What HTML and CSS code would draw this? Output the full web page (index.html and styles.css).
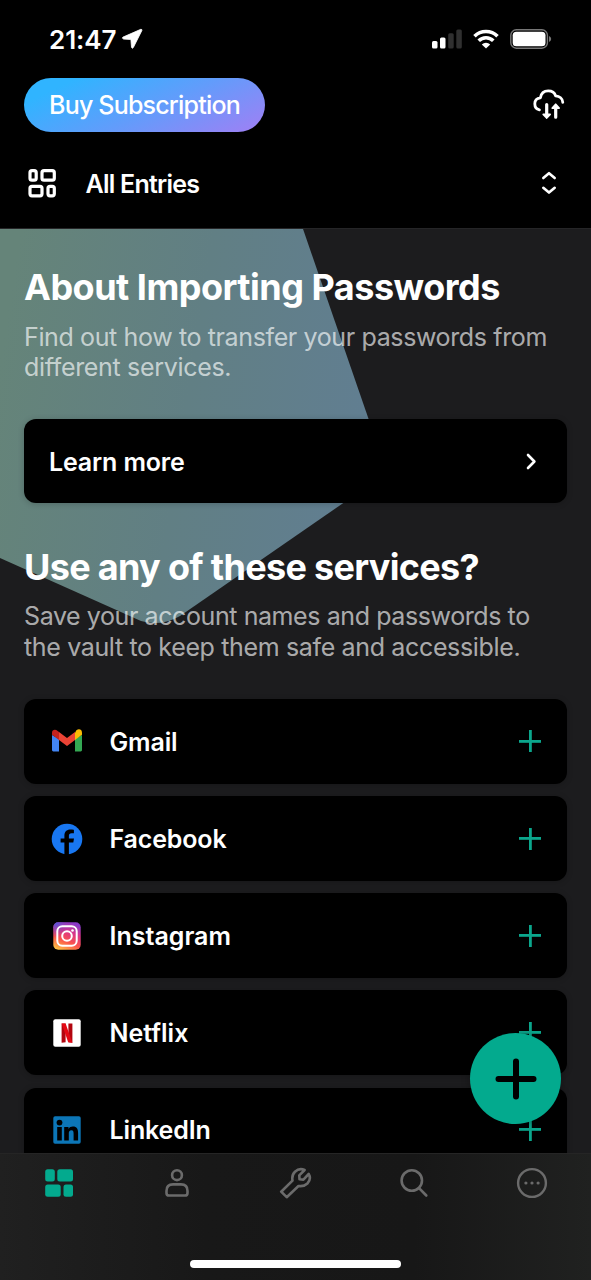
FILE: index.html
```html
<!DOCTYPE html>
<html lang="en">
<head>
<meta charset="utf-8">
<title>All Entries</title>
<link rel="stylesheet" href="styles.css">
</head>
<body>
<div class="screen">
  <header class="header">
    <div class="status">
      <span class="time">21:47</span>
      <svg class="location" width="22" height="22" viewBox="0 0 22 22"><path d="M19.800 1.300 2 9.100q-1.500 1.200.6 2l7.300.4.6 7.700q.7 2 1.900.2L20.900 2.500q.3-1.400-1.100-1.200z" fill="#fff" stroke="#fff" stroke-width=".8" stroke-linejoin="round"/></svg>
      <svg class="signal" width="30" height="20" viewBox="0 0 30 20"><rect x="0" y="12" width="5.500" height="7.500" rx="1.500" fill="#fff"/><rect x="8" y="8.500" width="5.500" height="11" rx="1.500" fill="#fff"/><rect x="16.200" y="4.300" width="5.500" height="15.200" rx="1.500" fill="#303030"/><rect x="24.300" y="0.500" width="5.500" height="19" rx="1.500" fill="#303030"/></svg>
      <svg class="wifi" width="26" height="20" viewBox="0 0 26 20"><g fill="none" stroke="#fff" stroke-width="3.600"><path d="M1.500 7.200a16.400 16.400 0 0 1 23 0"/><path d="M5.700 11.800a10.300 10.300 0 0 1 14.600 0"/></g><path d="M13 19.600 8.800 15.500a6 6 0 0 1 8.400 0z" fill="#fff"/></svg>
      <svg class="battery" width="42" height="20" viewBox="0 0 42 20"><rect x=".8" y=".8" width="36.600" height="18.400" rx="5.500" fill="none" stroke="#777" stroke-width="1.400"/><rect x="2.700" y="2.700" width="32.800" height="14.600" rx="3.600" fill="#fff"/><path d="M39 7q2.200 1 2.200 3T39 13z" fill="#777"/></svg>
    </div>
    <div class="toolbar">
      <button class="buy"><span class="t-buy">Buy Subscription</span></button>
      <svg class="sync" width="34" height="34" viewBox="0 0 34 34" fill="none" stroke="#fff" stroke-width="2.800" stroke-linecap="round" stroke-linejoin="round"><path d="M7.400 21.800C4.600 21.300 2.800 19 2.800 15.800c0-3.400 2.300-5.700 5.600-6C9.100 5.500 12.200 2.900 16.200 2.900c3.600 0 6.500 1.900 7.400 4.900 3.900.3 7 2.800 7.200 6.500"/><path d="M14.700 16.500v10.800M23.700 29.200V18.500" stroke-width="3.200"/><path d="M11.300 26.300h6.800l-3.400 3.700zM20.300 20h6.800l-3.400-3.700z" fill="#fff" stroke-width="1.800"/></svg>
    </div>
    <div class="filter">
      <svg width="30" height="30" viewBox="0 0 30 30" fill="none" stroke="#fff" stroke-width="3.200"><rect x="3" y="2.700" width="6.200" height="9.500" rx="2"/><rect x="15" y="2.700" width="12.300" height="9.500" rx="2"/><rect x="3" y="18.300" width="12" height="9.500" rx="2"/><rect x="21" y="18.300" width="6.300" height="9.500" rx="2"/></svg>
      <span class="filter-name t-all">All Entries</span>
      <svg width="16" height="24" viewBox="0 0 16 24" fill="none" stroke="#fff" stroke-width="2.600" stroke-linecap="round" stroke-linejoin="round"><path d="M2.300 7 8 2.200 13.700 7M2.300 16.800 8 21.600l5.700-4.800"/></svg>
    </div>
  </header>

  <main class="content">
    <svg class="backdrop" width="400" height="400" viewBox="0 0 400 400"><defs><linearGradient id="glow" gradientUnits="userSpaceOnUse" x1="0" y1="130" x2="380" y2="190"><stop offset="0" stop-color="#658479"/><stop offset=".5" stop-color="#617f84"/><stop offset="1" stop-color="#617e92"/></linearGradient></defs><path d="M0 0H303L381 226Q385 238 378 250L180 387Q161 398 141 392L0 329Z" fill="url(#glow)"/></svg>
    <section class="intro">
      <h1><span class="t-h1">About Importing Passwords</span></h1>
      <p><span class="t-p1">Find out how to transfer your passwords from</span><br><span class="t-p2">different services.</span></p>
      <a class="card learn"><span class="t-learn">Learn more</span><svg width="14" height="20" viewBox="0 0 14 20" fill="none" stroke="#fff" stroke-width="2.600" stroke-linecap="round" stroke-linejoin="round"><path d="m4 3 6.400 6.500L4 16"/></svg></a>
    </section>
    <section class="services">
      <h2><span class="t-h2">Use any of these services?</span></h2>
      <p><span class="t-p3">Save your account names and passwords to</span><br><span class="t-p4">the vault to keep them safe and accessible.</span></p>
      <div class="list">
        <div class="card service">
          <svg class="logo" width="32" height="32" viewBox="0 -0.900 32 32"><path d="M1 9v15.200c0 .8.6 1.300 1.400 1.300H8V13z" fill="#4285f4"/><path d="M24 13v12.500h5.600c.8 0 1.400-.5 1.400-1.300V9z" fill="#34a853"/><path d="M24 6.800V14l7-5.200V6.800c0-3.600-3.400-4.200-5.600-2.400z" fill="#fbbc04"/><path d="M8 14V6.200l8 6 8-6V14l-8 6z" fill="#ea4335"/><path d="M1 6.800v2L8 14V6.200L6.600 5C4.400 3.200 1 3.700 1 6.800z" fill="#c5221f"/></svg>
          <span class="name t-gmail">Gmail</span><span class="plus"></span>
        </div>
        <div class="card service">
          <svg class="logo" width="32" height="32" viewBox="0 0 32 32"><circle cx="16" cy="16" r="15.300" fill="#1877f2"/><path d="M13.400 32V19.600H9.600v-4.100h3.800v-2.900c0-4 2.300-6.200 5.900-6.200 1.200 0 2.800.2 3.600.4v3.500h-2.300c-2 0-2.700 1.200-2.700 2.500v2.700H23l-.7 4.100h-4.400V32z" fill="#000"/></svg>
          <span class="name t-facebook">Facebook</span><span class="plus"></span>
        </div>
        <div class="card service">
          <svg class="logo" width="32" height="32" viewBox="0 0 32 32"><defs><linearGradient id="ig" x1=".2" y1="1" x2=".65" y2="0"><stop offset="0" stop-color="#ffc044"/><stop offset=".35" stop-color="#fb554b"/><stop offset=".68" stop-color="#dc3586"/><stop offset="1" stop-color="#8a3ac9"/></linearGradient><radialGradient id="igblue" cx=".08" cy="0" r=".55"><stop offset="0" stop-color="#4a5be0"/><stop offset="1" stop-color="#7a3bd0" stop-opacity="0"/></radialGradient></defs><rect x="2.300" y="2.300" width="27.400" height="27.400" rx="5" fill="url(#ig)"/><rect x="2.300" y="2.300" width="27.400" height="27.400" rx="5" fill="url(#igblue)"/><g fill="none" stroke="#fff" stroke-width="2"><rect x="6.300" y="6.300" width="19.400" height="19.400" rx="5"/><circle cx="16" cy="16" r="4.800"/></g><circle cx="21.500" cy="10.500" r="1.300" fill="#fff"/></svg>
          <span class="name t-instagram">Instagram</span><span class="plus"></span>
        </div>
        <div class="card service">
          <svg class="logo" width="32" height="32" viewBox="0 0 32 32"><rect x="2.300" y="2.300" width="27.400" height="27.400" rx="2" fill="#fff"/><path d="M10.600 6.500h4v18.700l-4 .6zM17.400 6.500h4v19.300l-4-.6z" fill="#b1060f"/><path d="M10.600 6.500h4l6.800 19.300-4.200-.5z" fill="#e50914"/></svg>
          <span class="name t-netflix">Netflix</span><span class="plus"></span>
        </div>
        <div class="card service">
          <svg class="logo" width="32" height="32" viewBox="0 0 32 32"><rect x="2.300" y="2.300" width="27.400" height="27.400" rx="1.800" fill="#0c76b7"/><circle cx="8.500" cy="8.600" r="2.900" fill="#000"/><path d="M6.200 13h4.600v13.500H6.200zM13.200 13h4.300v1.900c.9-1.500 2.500-2.300 4.400-2.300 4 0 5.200 2.600 5.200 6.400v7.500h-4.500v-6.700c0-1.800-.2-3.500-2.200-3.500s-2.600 1.500-2.600 3.400v6.800h-4.600z" fill="#000"/></svg>
          <span class="name t-linkedin">LinkedIn</span><span class="plus"></span>
        </div>
      </div>
    </section>
  </main>

  <button class="fab" aria-label="Add"><svg width="42" height="42" viewBox="0 0 42 42" stroke="#000" stroke-width="6" stroke-linecap="round"><path d="M21 3.500v35M3.500 21h35"/></svg></button>

  <footer class="tabs">
    <nav class="tab-row">
      <svg width="32" height="32" viewBox="0 0 32 32" fill="#03aa8e"><rect x="2.200" y="2.200" width="9.600" height="12.400" rx="2.500"/><rect x="14.300" y="2.200" width="15.700" height="12.400" rx="2.500"/><rect x="2.200" y="17.400" width="15.500" height="12.400" rx="2.500"/><rect x="20.500" y="17.400" width="9.500" height="12.400" rx="2.500"/></svg>
      <svg width="32" height="32" viewBox="0 0 32 32" fill="none" stroke="#6b6b6b" stroke-width="2.600"><circle cx="16" cy="8.200" r="4.900"/><path d="M12 17.400h8c4.300 0 6.500 2.600 6.500 6.500v2c0 1.700-.9 2.600-2.600 2.600H8.100c-1.700 0-2.600-.9-2.600-2.600v-2c0-3.900 2.200-6.500 6.500-6.500z"/></svg>
      <svg width="34" height="34" viewBox="0 0 34 34" fill="none" stroke="#6b6b6b" stroke-width="2.600" stroke-linejoin="round"><path d="m3.200 25.700 11.300-11.100c-.6-3.300.2-6.700 2.500-8.900 2.800-2.600 6.600-3 9.600-1.700l-5.300 5.400.2 3.900 3.900.3L30.700 8c1.700 3 1.200 6.900-1.300 9.500-2.400 2.300-5.600 3-8.900 2.500L8.700 31.200z"/></svg>
      <svg width="32" height="32" viewBox="0 0 32 32" fill="none" stroke="#6b6b6b" stroke-width="2.600" stroke-linecap="round"><circle cx="13.800" cy="13.500" r="10.200"/><path d="m21.300 21.300 7 7.200"/></svg>
      <svg width="32" height="32" viewBox="0 0 32 32"><circle cx="16" cy="16" r="13.900" fill="none" stroke="#6b6b6b" stroke-width="2.400"/><g fill="#6b6b6b"><circle cx="9.900" cy="16" r="1.600"/><circle cx="16" cy="16" r="1.600"/><circle cx="22.100" cy="16" r="1.600"/></g></svg>
    </nav>
    <div class="home-indicator"></div>
  </footer>
</div>
</body>
</html>
```
FILE: styles.css
```css
* { box-sizing: border-box; }
body { margin: 0; background: #000; color: #fff; font-family: Inter, "Liberation Sans", sans-serif; }
button { border: 0; padding: 0; font-family: inherit; color: inherit; }
svg { display: block; flex: none; }
span { white-space: nowrap; }
.screen { position: relative; width: 591px; height: 1280px; overflow: hidden; display: flex; flex-direction: column; background: #1c1c1e; }

.header { flex: none; height: 229px; background: #000; border-bottom: 1px solid #252527; }
.status { display: flex; align-items: center; height: 78px; padding: 0 39px 0 49px; }
.time { width: 66.500px; font-size: 26px; font-weight: 600; letter-spacing: -0.050px; }
.location { margin-left: 5px; }
.signal { margin-left: auto; }
.wifi { margin-left: 11px; }
.battery { margin-left: 11.500px; }
.toolbar { display: flex; justify-content: space-between; height: 54px; padding: 0 25px 0 24px; align-items: center; }
.buy { width: 241px; height: 54px; border-radius: 27px; font-size: 25px; font-weight: 500; background: linear-gradient(155deg, #30b4ff 15%, #629cfb 55%, #9a82f5 95%); }
.filter { display: flex; align-items: center; height: 96px; padding: 6px 34px 0 27px; }
.filter-name { flex: 1; margin-left: 28.500px; padding-top: 1px; font-size: 25px; font-weight: 600; }

.content { position: relative; flex: none; height: 924px; padding: 0 24px; overflow: hidden; }
.backdrop { position: absolute; left: 0; top: 0; }
.intro, .services { position: relative; }
.intro { padding-top: 35px; }
h1, h2 { margin: 0; height: 46px; line-height: 46px; font-size: 36px; font-weight: 700; }
p { margin: 11.600px 0 0; font-size: 25px; line-height: 30.300px; color: rgba(255, 255, 255, 0.650); height: 61px; }
.card { display: flex; align-items: center; height: 84.500px; background: #000; border-radius: 12px; box-shadow: 0 1px 6px rgba(0, 0, 0, 0.200); font-size: 25px; font-weight: 600; }
.learn { margin-top: 36.200px; padding: 1px 29.500px 0 25px; justify-content: space-between; }
.services { padding-top: 40.500px; }
.list { display: flex; flex-direction: column; gap: 12.600px; margin-top: 36.800px; }
.service { padding: 0 26px 0 26.500px; }
.name { flex: 1; margin-left: 27px; padding-top: 1px; }
.plus { width: 22px; height: 22px; background: linear-gradient(#0ba68c, #0ba68c) center / 22px 2.800px no-repeat, linear-gradient(#0ba68c, #0ba68c) center / 2.800px 22px no-repeat; }

/* Tracking per label */
.t-buy { letter-spacing: -0.800px; }
.t-all { letter-spacing: -0.750px; }
.t-h1 { letter-spacing: -0.500px; }
.t-h2 { letter-spacing: -0.680px; }
.t-p1 { letter-spacing: -0.370px; }
.t-p2 { letter-spacing: -0.320px; }
.t-p3 { letter-spacing: -0.410px; }
.t-p4 { letter-spacing: -0.350px; }
.t-learn, .t-facebook, .t-gmail, .t-linkedin { letter-spacing: -0.150px; }

.fab { position: absolute; left: 470px; top: 1033px; width: 91px; height: 91px; border-radius: 50%; background: #03aa8e; display: flex; align-items: center; justify-content: center; box-shadow: 0 1px 8px rgba(0, 0, 0, 0.300); }
.tabs { flex: none; height: 127px; display: flex; flex-direction: column; align-items: center; justify-content: space-between; background: linear-gradient(90deg, #202020, #181818 35%, #171717 70%, #202120); border-top: 1px solid #252525; padding: 12px 0 12px; }
.tab-row { width: 100%; height: 32px; display: grid; grid-template-columns: repeat(5, 1fr); justify-items: center; align-items: center; }
.home-indicator { width: 211px; height: 8px; border-radius: 4px; background: #fff; }
```
